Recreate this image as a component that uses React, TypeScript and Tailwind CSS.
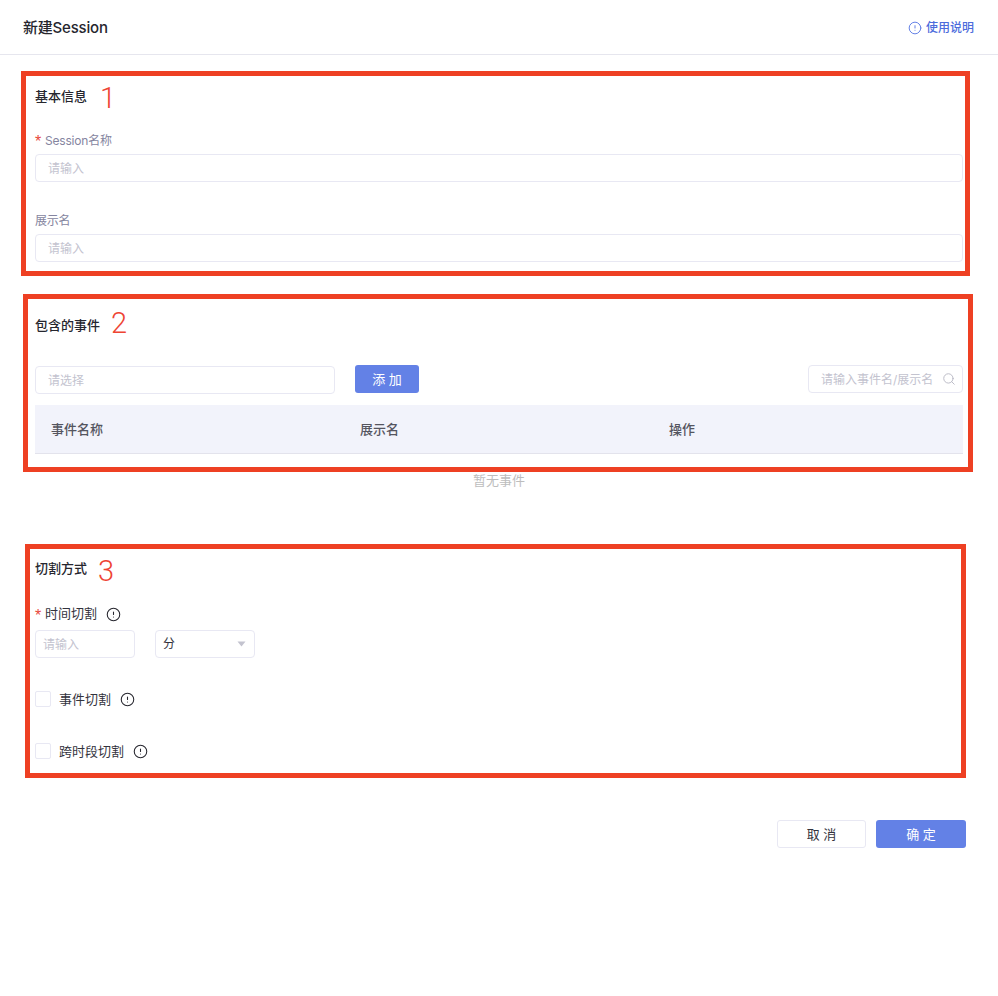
import { CircleAlert, Search } from "lucide-react";

const inputClass =
  "h-7 rounded-[4px] border border-[#e8e8f3] bg-white text-xs text-[#333] outline-none placeholder:text-[#c3c3cf]";

const markClass = "pointer-events-none absolute border-[5px] border-[#ee4023]";
const digitClass = "absolute font-['Roboto',sans-serif] text-[29px] leading-8 font-light text-[#ee4433]";
const starClass = "mr-1 w-1.5 pt-1 font-['Liberation_Sans',sans-serif] text-[16px] leading-5 text-[#e8483a]";

const Heading = ({ text }: { text: string }) => (
  <h2 className="h-5 text-[13px] leading-5 font-medium text-[#26262e]">{text}</h2>
);

const Label = ({ text, required }: { text: string; required?: boolean }) => (
  <label className="flex h-5 items-center text-xs leading-5 tracking-[-0.2px] text-[#8585a0]">
    {required && <span className={starClass}>*</span>}
    <span className="pt-px">{text}</span>
  </label>
);

const Tip = () => <CircleAlert size={15} strokeWidth={1.7} className="text-[#26262e]" />;

const CheckRow = ({ text }: { text: string }) => (
  <div className="flex h-5 items-center">
    <input
      type="checkbox"
      className="h-4 w-4 appearance-none rounded-[2px] border border-[#e8e8f3] bg-white"
    />
    <span className="ml-2 pt-px text-[13px] text-[#33333d]">{text}</span>
    <span className="ml-[9px]">
      <Tip />
    </span>
  </div>
);

export default function App() {
  return (
    <div className="relative min-h-[996px] bg-white font-['Inter','Noto_Sans_CJK_SC',sans-serif]">
      <header className="flex h-[55px] items-center justify-between border-b border-[#e6e6ee] pt-px pr-6 pl-[23px]">
        <h1 className="pt-px text-[15px] font-medium tracking-[-0.2px] text-[#26262e]">新建Session</h1>
        <a className="flex items-center gap-1 text-xs font-medium text-[#4d6cdc]">
          <CircleAlert size={14} strokeWidth={1.7} className="text-[#6381e6]" />
          使用说明
        </a>
      </header>

      <div className="px-[35px]">
        <section className="pt-[31px]">
          <Heading text="基本信息" />
          <div className="mt-6">
            <Label text="Session名称" required />
            <input className={`${inputClass} mt-1 w-full pl-3`} placeholder="请输入" />
          </div>
          <div className="mt-7">
            <Label text="展示名" />
            <input className={`${inputClass} mt-1 w-full pl-3`} placeholder="请输入" />
          </div>
        </section>

        <section className="mt-[53px]">
          <Heading text="包含的事件" />
          <div className="mt-[30px] flex items-start">
            <input className={`${inputClass} mt-px w-[300px] pl-3`} placeholder="请选择" />
            <button className="ml-5 h-7 w-16 rounded-[3px] bg-[#6381e6] pt-px text-[13px] text-white">
              添 加
            </button>
            <div className="relative ml-auto">
              <input className={`${inputClass} w-[155px] pl-3`} placeholder="请输入事件名/展示名" />
              <Search
                size={14}
                strokeWidth={1.5}
                className="absolute top-[7px] right-[7px] text-[#b4b4c0]"
              />
            </div>
          </div>
          <div className="mt-[11px] grid h-[49px] grid-cols-[309px_309px_1fr] items-center border-b border-[#e3e3ec] bg-[#f2f3fb] pt-px text-[13px] font-medium text-[#55555f]">
            <span className="px-4">事件名称</span>
            <span className="px-4">展示名</span>
            <span className="px-4">操作</span>
          </div>
          <p className="mt-4 h-5 text-center text-[13px] leading-5 text-[#bdbdbd]">暂无事件</p>
        </section>

        <section className="mt-[68px]">
          <Heading text="切割方式" />
          <label className="mt-[26px] flex h-5 items-center text-[13px] text-[#33333d]">
            <span className={starClass}>*</span>
            时间切割
            <span className="ml-[9px]">
              <Tip />
            </span>
          </label>
          <div className="mt-1.5 flex gap-5">
            <input className={`${inputClass} w-[100px] pl-[7px]`} placeholder="请输入" />
            <div className="flex h-7 w-[100px] items-center justify-between rounded-[4px] border border-[#e8e8f3] pr-2 pl-[7px] text-xs text-[#33333d]">
              分
              <svg width="9" height="6" viewBox="0 0 9 6">
                <path d="M0.5 0.5H8.5L4.5 5.5Z" fill="#c3c3cf" />
              </svg>
            </div>
          </div>
          <div className="mt-[31px]">
            <CheckRow text="事件切割" />
          </div>
          <div className="mt-8">
            <CheckRow text="跨时段切割" />
          </div>
        </section>
      </div>

      <footer className="mt-[59px] flex justify-end gap-[10px] pr-8">
        <button className="h-7 w-[89px] rounded-[3px] border border-[#e8e8f3] bg-white pt-px text-[13px] text-[#33333d]">
          取 消
        </button>
        <button className="h-7 w-[90px] rounded-[3px] bg-[#6381e6] pt-px text-[13px] text-white">
          确 定
        </button>
      </footer>

      <div className={`${markClass} top-[71px] left-[21px] h-[205px] w-[949px]`} />
      <div className={`${markClass} top-[294px] left-[23px] h-[178px] w-[950px]`} />
      <div className={`${markClass} top-[544px] left-[25px] h-[234px] w-[941px]`} />
      <span className={`${digitClass} top-[82px] left-[100px]`}>1</span>
      <span className={`${digitClass} top-[307px] left-[111px]`}>2</span>
      <span className={`${digitClass} top-[555px] left-[98px]`}>3</span>
    </div>
  );
}
